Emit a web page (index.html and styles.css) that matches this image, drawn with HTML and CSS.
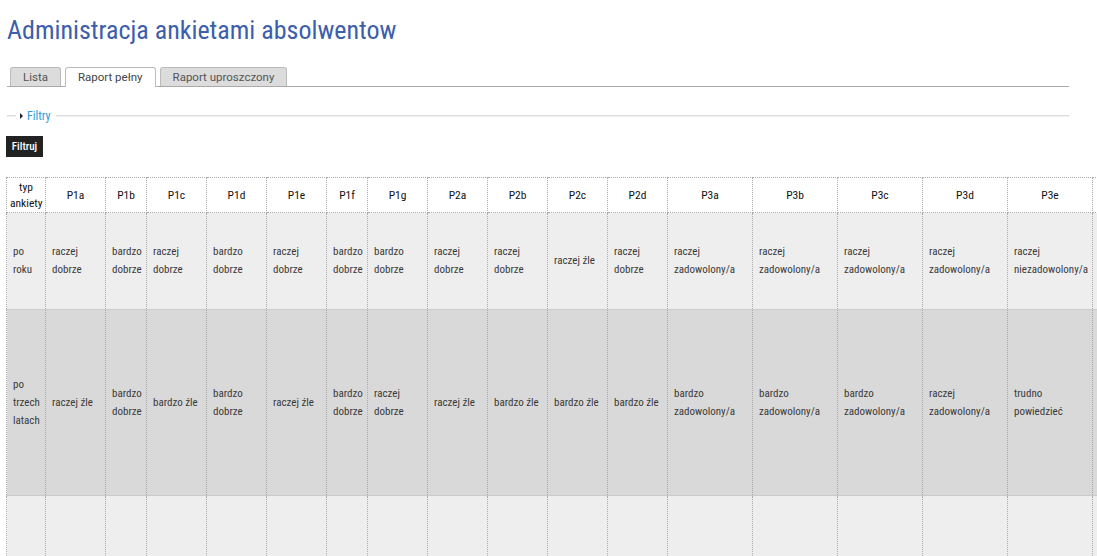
FILE: index.html
```html
<!DOCTYPE html>
<html lang="pl">
<head>
<meta charset="utf-8">
<title>Administracja ankietami absolwentow</title>
<link rel="stylesheet" href="styles.css">
</head>
<body>
<div class="page">
  <h1 class="title">Administracja ankietami absolwentow</h1>

  <ul class="tabs">
    <li class="tab">Lista</li>
    <li class="tab tab-active">Raport pełny</li>
    <li class="tab">Raport uproszczony</li>
  </ul>

  <div class="filters">
    <span class="filters-line filters-line-short"></span>
    <span class="filters-legend"><span class="filters-arrow"></span>Filtry</span>
    <span class="filters-line filters-line-long"></span>
  </div>

  <button class="btn-filter" type="button">Filtruj</button>

  <table class="report">
    <colgroup>
      <col class="c39"><col class="c60"><col class="c41"><col class="c60"><col class="c60"><col class="c60"><col class="c41"><col class="c60"><col class="c60"><col class="c60"><col class="c60"><col class="c60"><col class="c85"><col class="c85"><col class="c85"><col class="c85"><col class="c85"><col class="c85">
    </colgroup>
    <thead>
      <tr>
        <th>typ ankiety</th><th>P1a</th><th>P1b</th><th>P1c</th><th>P1d</th><th>P1e</th><th>P1f</th><th>P1g</th><th>P2a</th><th>P2b</th><th>P2c</th><th>P2d</th><th>P3a</th><th>P3b</th><th>P3c</th><th>P3d</th><th>P3e</th><th></th>
      </tr>
    </thead>
    <tbody>
      <tr class="row-a">
        <td>po roku</td><td>raczej dobrze</td><td>bardzo dobrze</td><td>raczej dobrze</td><td>bardzo dobrze</td><td>raczej dobrze</td><td>bardzo dobrze</td><td>bardzo dobrze</td><td>raczej dobrze</td><td>raczej dobrze</td><td>raczej źle</td><td>raczej dobrze</td><td>raczej zadowolony/a</td><td>raczej zadowolony/a</td><td>raczej zadowolony/a</td><td>raczej zadowolony/a</td><td>raczej niezadowolony/a</td><td></td>
      </tr>
      <tr class="row-b">
        <td>po trzech latach</td><td>raczej źle</td><td>bardzo dobrze</td><td>bardzo źle</td><td>bardzo dobrze</td><td>raczej źle</td><td>bardzo dobrze</td><td>raczej dobrze</td><td>raczej źle</td><td>bardzo źle</td><td>bardzo źle</td><td>bardzo źle</td><td>bardzo zadowolony/a</td><td>bardzo zadowolony/a</td><td>bardzo zadowolony/a</td><td>raczej zadowolony/a</td><td>trudno powiedzieć</td><td></td>
      </tr>
      <tr class="row-c">
        <td></td><td></td><td></td><td></td><td></td><td></td><td></td><td></td><td></td><td></td><td></td><td></td><td></td><td></td><td></td><td></td><td></td><td></td>
      </tr>
    </tbody>
  </table>
</div>
</body>
</html>
```

FILE: styles.css
```css
html, body {
  margin: 0;
  padding: 0;
  background: #fff;
  overflow: hidden;
}

body {
  font-family: "Roboto Condensed", Roboto, "Liberation Sans", sans-serif;
  font-stretch: condensed;
  color: #333;
}

.page {
  width: 1063px;
  padding: 13px 0 0 6px;
}

.title {
  margin: 0 0 0 1px;
  font-size: 26px;
  line-height: 34px;
  font-weight: 400;
  color: #3c5eab;
}

.tabs {
  display: flex;
  gap: 4px;
  list-style: none;
  margin: 20px 0 0 1px;
  padding: 0 0 0 3px;
  border-bottom: 1px solid #aaa;
  height: 19px;
}

.tab {
  font-family: Roboto, "Liberation Sans", sans-serif;
  font-stretch: normal;
  font-size: 11.5px;
  line-height: 18px;
  color: #555;
  padding: 0 12px;
  background: #dcdcdc;
  border: 1px solid #bbb;
  border-bottom: none;
  border-radius: 3px 3px 0 0;
}

.tab-active {
  background: #fff;
  height: 19px;
  color: #444;
}

.filters {
  display: flex;
  align-items: center;
  margin: 20px 0 0 1px;
  height: 18px;
}

.filters-line {
  display: block;
  height: 0;
  border-top: 1px solid #ddd;
  border-bottom: 1px solid #f0f0f0;
}

.filters-line-short {
  width: 9px;
}

.filters-line-long {
  flex: 1;
}

.filters-legend {
  display: flex;
  align-items: center;
  padding: 0 5px 0 4px;
  font-size: 12px;
  color: #2aa0d8;
}

.filters-arrow {
  width: 0;
  height: 0;
  border-left: 3px solid #222;
  border-top: 3px solid transparent;
  border-bottom: 3px solid transparent;
  margin-right: 4px;
}

.btn-filter {
  display: block;
  margin: 11px 0 0 0;
  width: 37px;
  height: 21px;
  padding: 0;
  border: none;
  background: #222;
  color: #fff;
  font-family: inherit;
  font-stretch: condensed;
  font-size: 11px;
  font-weight: 500;
}

.report {
  margin-top: 20px;
  border-collapse: collapse;
  table-layout: fixed;
  width: 1171px;
  font-size: 11px;
}

.c39 { width: 39px; }
.c41 { width: 41px; }
.c60 { width: 60px; }
.c85 { width: 85px; }

.report th,
.report td {
  border-left: 1px dotted #aaa;
  border-right: 1px dotted #aaa;
  text-align: left;
  vertical-align: middle;
}

.report th {
  height: 34px;
  padding: 0 3px;
  font-size: 11.5px;
  font-weight: 400;
  color: #111;
  line-height: 16px;
  text-align: center;
  background: #fff;
  border-top: 1px dotted #aaa;
  border-bottom: 1px dotted #aaa;
}

.report td {
  padding: 0 6px;
  line-height: 18px;
  color: #3a3a3a;
}

.row-a td {
  height: 96px;
  background: #eee;
  border-bottom: 1px solid #ccc;
}

.row-b td {
  height: 185px;
  background: #d9d9d9;
  border-bottom: 1px solid #ccc;
}

.row-c td {
  height: 80px;
  background: #eee;
}
```
